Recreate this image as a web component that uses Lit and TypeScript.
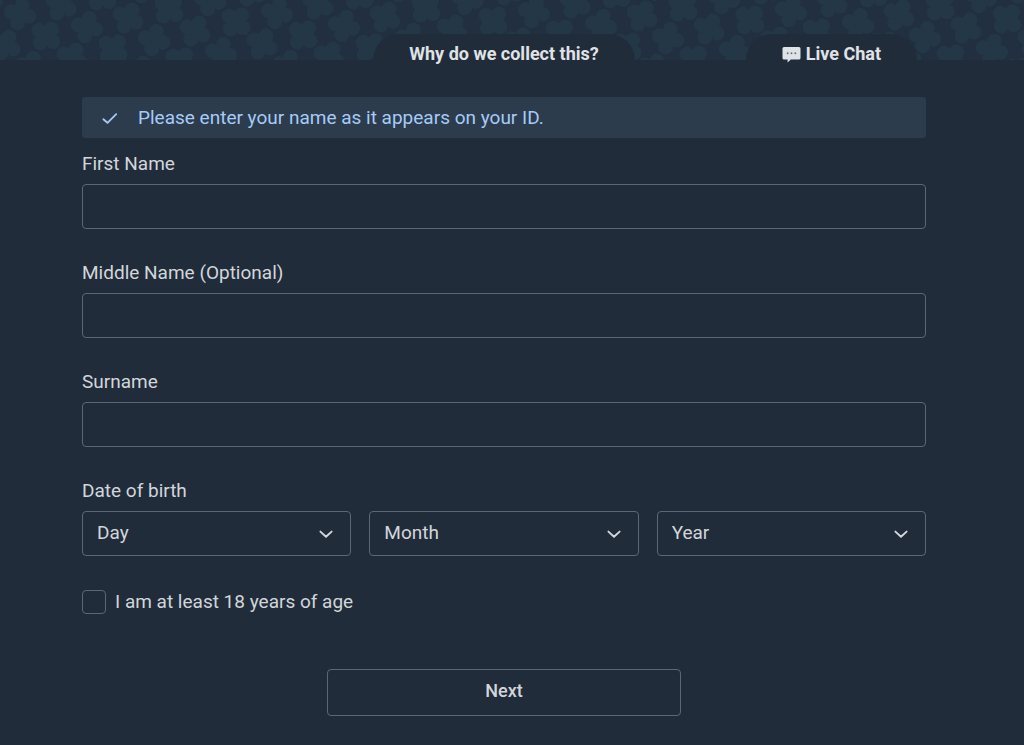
import { LitElement, html, css, svg } from "lit";
import { customElement } from "lit/decorators.js";

// Clovers sit on a slanted lattice with steps (41, -9) and (-15, 31); only the
// ones that touch the 60px band are kept.
const BAND = 60;
const CLOVERS: number[][] = [];
for (let i = -2; i < 90; i++) {
  for (let j = -2; j < 32; j++) {
    const x = 20 + 41 * i - 15 * j;
    const y = 14 - 9 * i + 31 * j;
    if (y > -20 && y < BAND + 20) CLOVERS.push([x, y, 15 + (((i + j) % 3) * 12)]);
  }
}

const DAYS = Array.from({ length: 31 }, (_, i) => String(i + 1));
const MONTHS = ["January", "February", "March", "April", "May", "June", "July",
  "August", "September", "October", "November", "December"];
const YEARS = Array.from({ length: 90 }, (_, i) => String(2006 - i));

@customElement("name-field")
export class NameField extends LitElement {
  static properties = { label: {}, name: {} };
  declare label: string;
  declare name: string;

  static styles = css`
    :host { display: block; }
    .label { display: block; line-height: 24px; margin-bottom: 8px; }
    .input {
      display: block;
      box-sizing: border-box;
      width: 100%;
      height: 45px;
      padding: 0 14px;
      border: 1px solid #5b6775;
      border-radius: 4px;
      background: transparent;
      color: inherit;
      font: inherit;
    }
    .input:focus { outline: none; border-color: #9cc4f0; }
  `;

  render() {
    return html`
      <label class="label" for="field">${this.label}</label>
      <input class="input" id="field" type="text" name=${this.name} />
    `;
  }
}

@customElement("date-select")
export class DateSelect extends LitElement {
  static properties = { label: {}, options: { attribute: false } };
  declare label: string;
  declare options: string[];

  static styles = css`
    :host { display: grid; align-items: center; }
    .select, .chevron { grid-area: 1 / 1; }
    .select {
      box-sizing: border-box;
      width: 100%;
      height: 45px;
      padding: 0 40px 2px 14px;
      border: 1px solid #5b6775;
      border-radius: 4px;
      appearance: none;
      background: #212c3b;
      color: inherit;
      font: inherit;
    }
    .select:focus { outline: none; border-color: #9cc4f0; }
    .chevron {
      justify-self: end;
      margin-right: 17px;
      width: 16px;
      height: 16px;
      pointer-events: none;
    }
  `;

  render() {
    return html`
      <select class="select" aria-label=${this.label}>
        <option value="">${this.label}</option>
        ${this.options.map((o) => html`<option>${o}</option>`)}
      </select>
      <svg class="chevron" viewBox="0 0 16 16" fill="none" stroke="#d3d8dd" stroke-width="1.9"
        stroke-linecap="round" stroke-linejoin="round" aria-hidden="true">
        <path d="M2.4 5.6 L8 10.7 L13.6 5.6" />
      </svg>
    `;
  }
}

@customElement("app-root")
export class AppRoot extends LitElement {
  static styles = css`
    :host {
      display: block;
      min-height: 100vh;
      background: #212c3b;
      color: #d2d6da;
      font: 400 19px/24px Roboto, sans-serif;
    }
    .header {
      position: relative;
      display: grid;
      grid-template-columns: 1fr auto 1fr;
      padding: 34px 98px 0 82px;
    }
    .pattern {
      position: absolute;
      top: 0;
      left: 0;
      width: 100%;
      height: 60px;
      overflow: hidden;
      background: #212f40;
    }
    .tab {
      position: relative;
      display: flex;
      align-items: center;
      gap: 5px;
      height: 40px;
      padding: 0 36px;
      border-radius: 26px 26px 0 0;
      background: #212c3b;
      color: #e0e3e6;
      font-size: 18px;
      font-weight: 700;
      text-decoration: none;
    }
    .why { grid-column: 2; }
    .chat { grid-column: 3; justify-self: end; margin-right: 9px; }
    .bubble { width: 19px; height: 18px; }
    .main { padding: 23px 98px 29px 82px; }
    .notice {
      display: flex;
      align-items: center;
      gap: 19px;
      height: 41px;
      padding: 0 19px;
      margin-bottom: 14px;
      border-radius: 3px;
      background: #2c3c4c;
      color: #a6cbf8;
    }
    .check { width: 18px; height: 18px; }
    .form { display: flex; flex-direction: column; }
    .fields { display: grid; gap: 32px; }
    .birth { border: 0; margin: 0; padding: 0; min-width: 0; }
    .legend { padding: 0; margin-bottom: 8px; line-height: 24px; }
    .dates { display: grid; grid-template-columns: repeat(3, 1fr); gap: 18px; }
    .age {
      display: flex;
      align-items: center;
      gap: 9px;
      align-self: flex-start;
      margin-top: 34px;
    }
    .box {
      appearance: none;
      box-sizing: border-box;
      width: 24px;
      height: 24px;
      margin: 0;
      border: 1px solid #5b6775;
      border-radius: 4px;
    }
    .box:checked { background: #a6cbf8; }
    .next {
      align-self: center;
      width: 42%;
      height: 47px;
      margin-top: 55px;
      padding: 0 0 3px;
      border: 1px solid #5b6775;
      border-radius: 4px;
      background: transparent;
      color: inherit;
      font: inherit;
      font-size: 18px;
      font-weight: 500;
    }
  `;

  private clover([x, y, turn]: number[]) {
    return svg`
      <g transform="translate(${x} ${y}) rotate(${turn})">
        <circle r="9"></circle>
        <circle cx="0" cy="-9" r="7.5"></circle>
        <circle cx="9" cy="0" r="7.5"></circle>
        <circle cx="0" cy="9" r="7.5"></circle>
        <circle cx="-9" cy="0" r="7.5"></circle>
      </g>`;
  }

  render() {
    return html`
      <header class="header">
        <svg class="pattern" aria-hidden="true">
          <g fill="#243747">${CLOVERS.map((c) => this.clover(c))}</g>
        </svg>
        <a class="tab why" href="#why">Why do we collect this?</a>
        <a class="tab chat" href="#chat">
          <svg class="bubble" viewBox="0 0 19 18" aria-hidden="true">
            <path fill="#e0e3e6" d="M2 2 H17 Q18.5 2 18.5 3.5 V13 Q18.5 14.5 17 14.5 H8.8 L5.6 17.6 V14.5 H2 Q.5 14.5 .5 13 V3.5 Q.5 2 2 2 Z" />
            <g fill="#6b7480">
              <circle cx="5.7" cy="8.3" r="1" />
              <circle cx="9.5" cy="8.3" r="1" />
              <circle cx="13.3" cy="8.3" r="1" />
            </g>
          </svg>
          Live Chat
        </a>
      </header>
      <main class="main">
        <div class="notice" role="note">
          <svg class="check" viewBox="0 0 18 18" fill="none" stroke="#a6cbf8" stroke-width="1.8"
            stroke-linecap="round" stroke-linejoin="round" aria-hidden="true">
            <path d="M2.4 10.2 L6.5 13.8 L15.2 5.2" />
          </svg>
          <span>Please enter your name as it appears on your ID.</span>
        </div>
        <form class="form" @submit=${(e: Event) => e.preventDefault()}>
          <div class="fields">
            <name-field .label=${"First Name"} .name=${"first"}></name-field>
            <name-field .label=${"Middle Name (Optional)"} .name=${"middle"}></name-field>
            <name-field .label=${"Surname"} .name=${"surname"}></name-field>
            <fieldset class="birth">
              <legend class="legend">Date of birth</legend>
              <div class="dates">
                <date-select .label=${"Day"} .options=${DAYS}></date-select>
                <date-select .label=${"Month"} .options=${MONTHS}></date-select>
                <date-select .label=${"Year"} .options=${YEARS}></date-select>
              </div>
            </fieldset>
          </div>
          <label class="age"><input class="box" type="checkbox" name="adult" />I am at least 18 years of age</label>
          <button class="next" type="submit">Next</button>
        </form>
      </main>
    `;
  }
}
